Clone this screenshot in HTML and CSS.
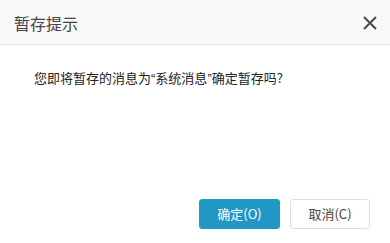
FILE: index.html
```
<!DOCTYPE html>
<html lang="zh-CN">
<head>
<meta charset="utf-8">
<link rel="stylesheet" href="styles.css">
</head>
<body>
<div class="dialog">
  <div class="header">
    <span class="title">暂存提示</span>
    <span class="close"><svg width="14" height="14" viewBox="0 0 14 14"><path d="M1 1L13 13M13 1L1 13" stroke="#4a4a4f" stroke-width="2" fill="none"/></svg></span>
  </div>
  <div class="body">
    <p class="msg">您即将暂存的消息为<span class="q">“</span>系统消息<span class="q">”</span>确定暂存吗?</p>
  </div>
  <div class="footer">
    <button class="btn primary">确定(O)</button>
    <button class="btn">取消(C)</button>
  </div>
</div>
</body>
</html>
```
FILE: styles.css
```
html, body {
  margin: 0;
  padding: 0;
  background: #fff;
}
.dialog {
  width: 390px;
  height: 243px;
  display: flex;
  flex-direction: column;
  font-family: "Noto Sans CJK SC", "Liberation Sans", sans-serif;
  color: #333;
}
.header {
  height: 44px;
  background: #f8f8f8;
  border-bottom: 1px solid #e8e8e8;
  display: flex;
  align-items: center;
  justify-content: space-between;
  padding: 0 13px 0 14px;
  flex: none;
}
.title {
  font-size: 16px;
  line-height: 20px;
  color: #444;
  margin-top: 1px;
}
.close {
  display: flex;
  width: 14px;
  height: 14px;
  margin-top: 1px;
}
.body {
  flex: 1;
  padding: 25px 34px 0;
}
.msg {
  margin: 0;
  font-size: 13px;
  line-height: 16px;
  color: #222;
}
.q {
  font-family: "Liberation Sans", sans-serif;
}
.footer {
  display: flex;
  justify-content: flex-end;
  gap: 10px;
  padding: 0 20px 14px;
}
.btn {
  width: 80px;
  height: 30px;
  border: 1px solid #dedede;
  border-radius: 3px;
  background: #fff;
  color: #444;
  font-family: "Noto Sans CJK SC", "Liberation Sans", sans-serif;
  font-size: 13px;
  padding: 0;
  line-height: 28px;
}
.btn.primary {
  background: #2097c4;
  border-color: #2097c4;
  color: #fff;
  width: 81px;
}
```
